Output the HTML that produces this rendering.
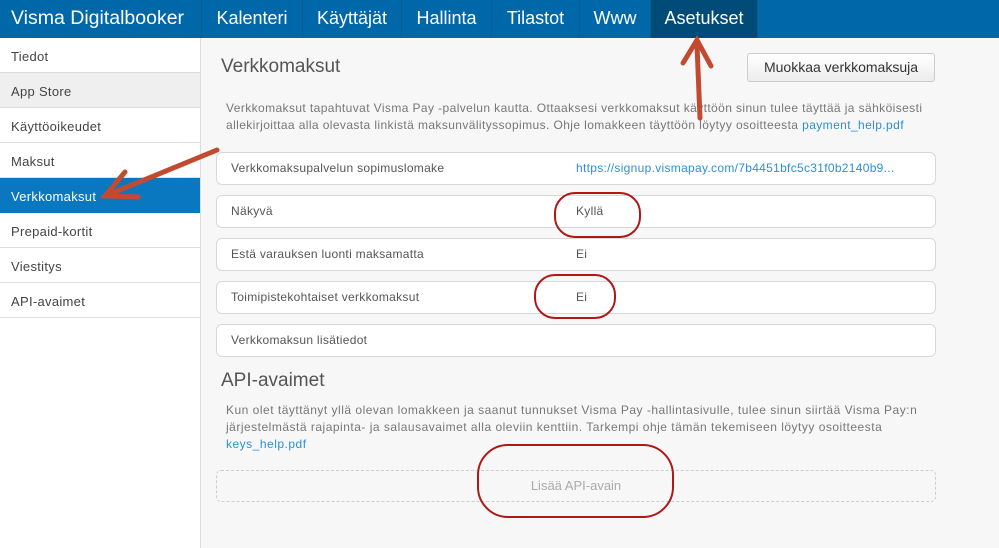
<!DOCTYPE html>
<html><head><meta charset="utf-8"><style>
*{box-sizing:border-box;margin:0;padding:0}
body{width:999px;height:548px;overflow:hidden;background:#f7f7f7;font-family:"Liberation Sans",sans-serif;position:relative;color:#555}
.nav{position:absolute;left:0;top:0;width:999px;height:38px;background:#0068a8}
.nav div{position:absolute;top:0;height:38px;line-height:37px;color:#fff;font-size:18px;text-align:center;border-right:1px solid #0a5d92}
.side{position:absolute;left:0;top:38px;width:201px;height:510px;background:#fff;border-right:1px solid #ddd}
.side div{height:35px;line-height:37px;padding-left:11px;font-size:13px;color:#444;border-bottom:1px solid #ddd;letter-spacing:0.3px}
.abs{position:absolute}
.row{position:absolute;left:216px;width:720px;height:33px;border:1px solid #d8d8d8;border-radius:6px;background:#fff;font-size:12px;line-height:31px;padding-left:14px;color:#555;letter-spacing:0.3px}
.row span{position:absolute;left:359px}
.p{font-size:12px;line-height:17px;color:#777;white-space:nowrap;letter-spacing:0.4px}
a{color:#2a90d8;text-decoration:none}
</style></head><body>
<div class="nav">
<div style="left:0;width:202px;text-align:left;padding-left:11px;font-size:19.5px">Visma Digitalbooker</div>
<div style="left:202px;width:101px">Kalenteri</div>
<div style="left:303px;width:99px">Käyttäjät</div>
<div style="left:402px;width:90px">Hallinta</div>
<div style="left:492px;width:88px">Tilastot</div>
<div style="left:580px;width:71px">Www</div>
<div style="left:651px;width:107px;background:#004b78">Asetukset</div>
</div>
<div class="side">
<div>Tiedot</div><div style="background:#efefef">App Store</div><div>Käyttöoikeudet</div><div>Maksut</div>
<div style="background:#0a78c0;color:#fff;border-color:#0a78c0">Verkkomaksut</div>
<div>Prepaid-kortit</div><div>Viestitys</div><div>API-avaimet</div>
</div>
<div class="abs" style="left:221px;top:56px;font-size:19px;color:#555">Verkkomaksut</div>
<div class="abs" style="left:747px;top:53px;width:188px;height:29px;border:1px solid #ccc;border-radius:3px;background:linear-gradient(#fff,#ececec);font-size:14px;line-height:27px;text-align:center;color:#333">Muokkaa verkkomaksuja</div>
<div class="abs p" style="left:226px;top:100px">Verkkomaksut tapahtuvat Visma Pay -palvelun kautta. Ottaaksesi verkkomaksut käyttöön sinun tulee täyttää ja sähköisesti<br>allekirjoittaa alla olevasta linkistä maksunvälityssopimus. Ohje lomakkeen täyttöön löytyy osoitteesta <a>payment_help.pdf</a></div>
<div class="row" style="top:152px">Verkkomaksupalvelun sopimuslomake<span><a>https://signup.vismapay.com/7b4451bfc5c31f0b2140b9...</a></span></div>
<div class="row" style="top:195px">Näkyvä<span>Kyllä</span></div>
<div class="row" style="top:238px">Estä varauksen luonti maksamatta<span>Ei</span></div>
<div class="row" style="top:281px">Toimipistekohtaiset verkkomaksut<span>Ei</span></div>
<div class="row" style="top:324px">Verkkomaksun lisätiedot</div>
<div class="abs" style="left:221px;top:370px;font-size:19px;color:#555">API-avaimet</div>
<div class="abs p" style="left:226px;top:402px;letter-spacing:0.5px">Kun olet täyttänyt yllä olevan lomakkeen ja saanut tunnukset Visma Pay -hallintasivulle, tulee sinun siirtää Visma Pay:n<br>järjestelmästä rajapinta- ja salausavaimet alla oleviin kenttiin. Tarkempi ohje tämän tekemiseen löytyy osoitteesta<br><a>keys_help.pdf</a></div>
<div class="abs" style="left:216px;top:470px;width:720px;height:32px;border:1px dashed #ccc;border-radius:5px;text-align:center;line-height:30px;font-size:13px;color:#aaa">Lisää API-avain</div>
<svg class="abs" style="left:0;top:0" width="999" height="548">
<g fill="none" stroke="#b01818" stroke-width="2">
<rect x="555" y="193" width="85" height="44" rx="20"/>
<rect x="535" y="275" width="80" height="43" rx="20"/>
<rect x="478" y="445" width="195" height="72" rx="30"/>
</g>
<g stroke="#c24a30" stroke-width="5" fill="none" stroke-linecap="round">
<line x1="700" y1="118" x2="697" y2="45"/>
<polyline points="683,63 697,40 711,66"/>
<line x1="217" y1="150" x2="110" y2="194"/>
<polyline points="125,172 105,196 138,197"/>
</g>
</svg>
</body></html>
